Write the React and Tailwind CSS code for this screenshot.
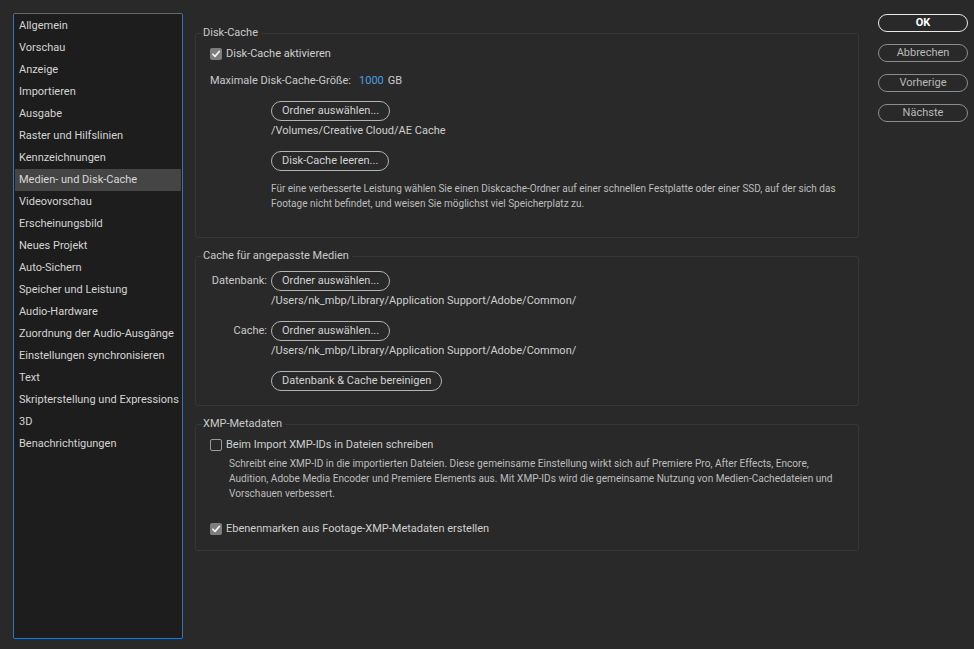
import React from "react";

const FONT = { fontFamily: "Roboto, 'Noto Sans', sans-serif" };

const NAV = [
  "Allgemein",
  "Vorschau",
  "Anzeige",
  "Importieren",
  "Ausgabe",
  "Raster und Hilfslinien",
  "Kennzeichnungen",
  "Medien- und Disk-Cache",
  "Videovorschau",
  "Erscheinungsbild",
  "Neues Projekt",
  "Auto-Sichern",
  "Speicher und Leistung",
  "Audio-Hardware",
  "Zuordnung der Audio-Ausgänge",
  "Einstellungen synchronisieren",
  "Text",
  "Skripterstellung und Expressions",
  "3D",
  "Benachrichtigungen",
];

const ACTIVE = "Medien- und Disk-Cache";

export default function App() {
  return (
    <div
      style={FONT}
      className="w-[974px] h-[649px] bg-[#292929] text-[#c9c9c9] flex p-[13px] pr-[6px] overflow-hidden"
    >
      {/* Sidebar */}
      <aside className="w-[170px] h-[626px] shrink-0 bg-[#1d1d1d] border border-[#3574b0] rounded-[2px] flex flex-col px-[1px] pt-[1px]">
        {NAV.map((label) => (
          <div
            key={label}
            className={`h-[22px] flex items-center pl-[4px] text-[11px] whitespace-nowrap ${
              label === ACTIVE ? "bg-[#454545] text-[#d8d8d8]" : "text-[#d4d4d4]"
            }`}
          >
            {label}
          </div>
        ))}
      </aside>

      {/* Content */}
      <main className="ml-[12px] mt-[13px] w-[664px] shrink-0 flex flex-col">
        <Group title="Disk-Cache" className="pb-[26px]">
          <div className="mt-[7px] pl-[7px]">
            <Check checked label="Disk-Cache aktivieren" />
          </div>
          <div className="mt-[13px] pl-[7px] h-[14px] flex items-center text-[11px]">
            <span>Maximale Disk-Cache-Größe:</span>
            <span className="ml-[8px] text-[#4b9fe1]">1000</span>
            <span className="ml-[4px]">GB</span>
          </div>
          <div className="pl-[68px] flex flex-col items-start">
            <div className="mt-[13px] flex">
              <Pill>Ordner auswählen...</Pill>
            </div>
            <Path className="mt-[3px]">/Volumes/Creative Cloud/AE Cache</Path>
            <div className="mt-[13px] flex">
              <Pill>Disk-Cache leeren...</Pill>
            </div>
            <p className="mt-[10px] text-[10px] leading-[15px] text-[#bdbdbd] pr-[8px]">
              Für eine verbesserte Leistung wählen Sie einen Diskcache-Ordner auf einer
              schnellen Festplatte oder einer SSD, auf der sich das Footage nicht befindet,
              und weisen Sie möglichst viel Speicherplatz zu.
            </p>
          </div>
        </Group>

        <Group title="Cache für angepasste Medien" className="mt-[11px] pb-[14px]">
          <div className="mt-[8px] flex items-center">
            <span className="w-[68px] text-right text-[11px] pr-[4px]">Datenbank:</span>
            <Pill>Ordner auswählen...</Pill>
          </div>
          <Path className="mt-[3px] ml-[68px]">
            /Users/nk_mbp/Library/Application Support/Adobe/Common/
          </Path>
          <div className="mt-[13px] flex items-center">
            <span className="w-[68px] text-right text-[11px] pr-[4px]">Cache:</span>
            <Pill>Ordner auswählen...</Pill>
          </div>
          <Path className="mt-[3px] ml-[68px]">
            /Users/nk_mbp/Library/Application Support/Adobe/Common/
          </Path>
          <div className="mt-[13px] ml-[68px] flex">
            <Pill>Datenbank &amp; Cache bereinigen</Pill>
          </div>
        </Group>

        <Group title="XMP-Metadaten" className="mt-[11px] pb-[14px]">
          <div className="mt-[7px] pl-[7px]">
            <Check label="Beim Import XMP-IDs in Dateien schreiben" />
          </div>
          <p className="mt-[4px] ml-[26px] min-w-0 text-[10.1px] leading-[15px] text-[#bdbdbd] whitespace-nowrap">
            Schreibt eine XMP-ID in die importierten Dateien. Diese gemeinsame Einstellung
            wirkt sich auf Premiere Pro, After Effects, Encore,
            <br />
            Audition, Adobe Media Encoder und Premiere Elements aus. Mit XMP-IDs wird die
            gemeinsame Nutzung von Medien-Cachedateien und
            <br />
            Vorschauen verbessert.
          </p>
          <div className="mt-[21px] pl-[7px]">
            <Check checked label="Ebenenmarken aus Footage-XMP-Metadaten erstellen" />
          </div>
        </Group>
      </main>

      {/* Dialog buttons */}
      <div className="ml-auto w-[90px] flex flex-col gap-[12px] pt-[1px]">
        <button className="h-[18px] rounded-full border-[1.5px] border-[#e8e8e8] text-[11px] font-bold text-white">
          OK
        </button>
        {["Abbrechen", "Vorherige", "Nächste"].map((b) => (
          <button
            key={b}
            className="h-[18px] rounded-full border border-[#8c8c8c] text-[11px] text-[#b9b9b9]"
          >
            {b}
          </button>
        ))}
      </div>
    </div>
  );
}

function Group({ title, className = "", children }) {
  return (
    <fieldset className={`min-w-0 border border-[#363636] rounded-[2px] px-[7px] ${className}`}>
      <legend className="text-[11px] leading-[14px] text-[#c9c9c9] pr-[3px]">{title}</legend>
      {children}
    </fieldset>
  );
}

function Check({ checked = false, label }) {
  return (
    <div className="h-[14px] flex items-center gap-[4px] text-[11px] text-[#cfcfcf]">
      {checked ? (
        <span className="w-[12px] h-[12px] rounded-[2px] bg-[#7d7d7d] flex items-center justify-center">
          <svg width="10" height="10" viewBox="0 0 10 10" fill="none">
            <path
              d="M1.8 5.2 L4 7.4 L8.4 2.4"
              stroke="#f2f2f2"
              strokeWidth="1.6"
              strokeLinecap="round"
              strokeLinejoin="round"
            />
          </svg>
        </span>
      ) : (
        <span className="w-[12px] h-[12px] rounded-[2px] border-[1.5px] border-[#9a9a9a]" />
      )}
      <span>{label}</span>
    </div>
  );
}

function Pill({ children }) {
  return (
    <button className="h-[20px] px-[10px] rounded-full border-[1.5px] border-[#b3b3b3] text-[11px] text-[#d2d2d2] whitespace-nowrap">
      {children}
    </button>
  );
}

function Path({ className = "", children }) {
  return (
    <div className={`h-[14px] flex items-center text-[11px] text-[#cfcfcf] ${className}`}>
      {children}
    </div>
  );
}
